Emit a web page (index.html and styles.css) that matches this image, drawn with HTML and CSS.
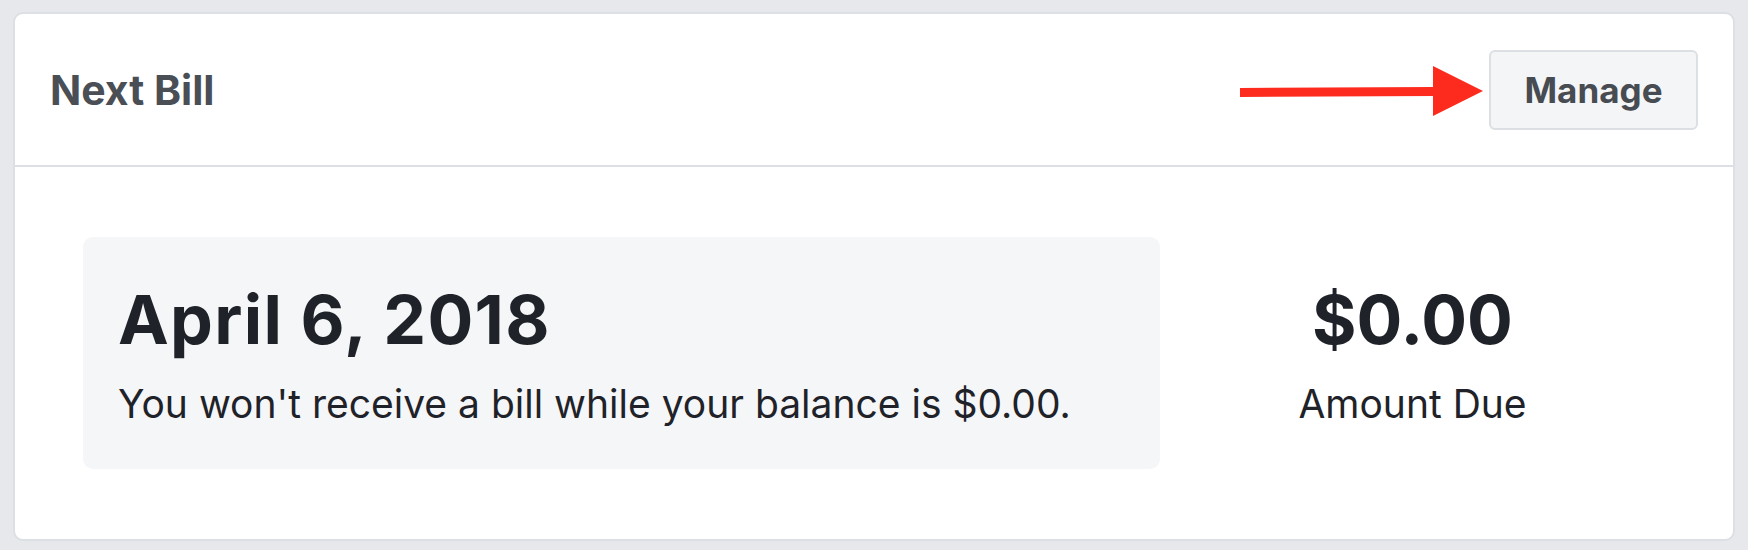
FILE: index.html
```html
<!DOCTYPE html>
<html>
<head>
  <title>Next Bill</title>
  <link rel="stylesheet" href="styles.css">
</head>
<body>

<div class="card">
  <div class="card-header">
    <h2 class="card-title">Next Bill</h2>
    <svg class="pointer" width="243" height="54" viewBox="0 0 243 54">
      <line x1="0" y1="28.5" x2="195" y2="27.5" stroke="#fd2a1e" stroke-width="9"/>
      <polygon points="193,2 243,27 193,52" fill="#fd2a1e"/>
    </svg>
    <button type="button" class="btn-manage">Manage</button>
  </div>

  <div class="card-body">
    <div class="bill-date">
      <div class="date">April 6, 2018</div>
      <p class="note">You won't receive a bill while your balance is $0.00.</p>
    </div>
    <div class="bill-amount">
      <div class="amount">$0.00</div>
      <p class="note">Amount Due</p>
    </div>
  </div>
</div>

</body>
</html>
```

FILE: styles.css
```css
body {
  margin: 0;
  padding: 12px 13px;
  background-color: #e6e8eb;
  font-family: Inter, "Noto Sans", sans-serif;
  color: #1f2329;
}

.card {
  background-color: #fff;
  border: 2px solid #dcdfe3;
  border-radius: 10px;
}

.card-header {
  display: flex;
  align-items: center;
  height: 151px;
  padding: 0 35px;
  border-bottom: 2px solid #dcdfe3;
}

.card-title {
  flex: 1;
  margin: 0;
  font-size: 41px;
  font-weight: 700;
  color: #4a4e55;
}

.pointer {
  margin-right: 6px;
  margin-top: 2px;
}

.btn-manage {
  width: 209px;
  height: 80px;
  background-color: #f4f5f7;
  border: 2px solid #dcdfe3;
  border-radius: 6px;
  font: 700 35px Inter, "Noto Sans", sans-serif;
  color: #474b52;
  cursor: pointer;
}

.card-body {
  display: flex;
  padding: 70px 68px 70px 68px;
}

.bill-date {
  width: 1077px;
  padding: 42px 35px 41px 35px;
  box-sizing: border-box;
  background-color: #f5f6f8;
  border-radius: 10px;
}

.bill-amount {
  flex: 1;
  padding-top: 42px;
  text-align: center;
}

.date, .amount {
  font-size: 68px;
  font-weight: 700;
  line-height: 80px;
}

.date {
  letter-spacing: 1.3px;
}

.note {
  margin: 21px 0 0 0;
  font-size: 39px;
  line-height: 48px;
}
```
